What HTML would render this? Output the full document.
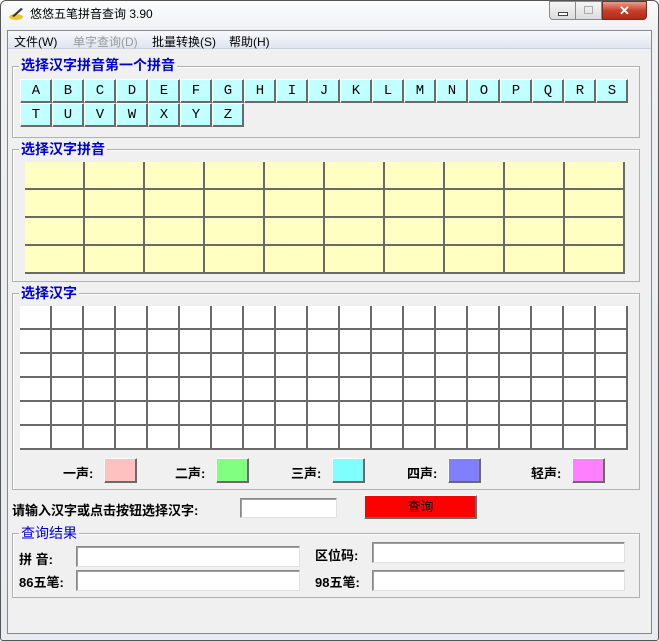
<!DOCTYPE html>
<html><head><meta charset="utf-8"><style>
*{margin:0;padding:0;box-sizing:border-box}
body{width:659px;height:641px;background:#fff;position:relative;overflow:hidden;font-family:"Liberation Sans","Noto Sans CJK SC",sans-serif;font-size:12px;color:#000}
.a{position:absolute}
.win{left:0;top:0;width:659px;height:641px;border:1px solid #555;border-radius:6px 6px 3px 3px;background:linear-gradient(#fdfdfd,#eef0f3 30px,#e8ebef)}
.client{left:7px;top:30px;width:645px;height:604px;background:#f0f0f0;border:1px solid #888}
.menu{left:8px;top:31px;width:643px;height:18px;background:linear-gradient(#f7f9fc,#dfe5f0);border-bottom:1px solid #c9d1de}
.menu span{position:absolute;top:2px;font-size:12px}
.grp{border:1px solid #b0b0b0;box-shadow:1px 1px 0 #fff inset}
.gt{background:#f0f0f0;color:#0000d0;font-weight:bold;font-size:14px;padding:0 2px;line-height:16px}
.b{border:1px solid;border-color:#fff #6a6a6a #6a6a6a #fff;box-shadow:-1px -1px 0 #6a6a6a inset}
.L{width:32px;height:24px;background:#c2ffff;font-family:"Liberation Mono",monospace;font-size:14px;text-align:center;line-height:22px;position:absolute}
.inp{background:#fff;border:1px solid;border-color:#8a8a8a #e0e0e0 #e0e0e0 #8a8a8a;box-shadow:1px 1px 0 #a0a0a0 inset}
.lab{font-weight:bold;font-size:13px}
</style></head><body>
<div class="a win"></div>
<div class="a" style="left:8px;top:6px;width:16px;height:14px;"><svg width="16" height="14"><ellipse cx="8" cy="11" rx="7" ry="3" fill="#e8c830"/><path d="M4 10 L13 2 L15 3 L6 11Z" fill="#333"/></svg></div>
<div class="a" style="left:30px;top:5px;font-size:12px">悠悠五笔拼音查询 3.90</div>
<div class="a" style="left:549px;top:1px;width:27px;height:19px;border:1px solid #8a8a8a;border-radius:0 0 0 4px;background:linear-gradient(#f6f6f6,#dcdcdc)"><div class="a" style="left:8px;top:10px;width:10px;height:4px;border:1px solid #444;background:#fff"></div></div>
<div class="a" style="left:576px;top:1px;width:26px;height:19px;border:1px solid #8a8a8a;border-left:0;background:linear-gradient(#f6f6f6,#dcdcdc)"><div class="a" style="left:8px;top:4px;width:9px;height:8px;border:1px solid #aaa"></div></div>
<div class="a" style="left:602px;top:1px;width:45px;height:19px;border:1px solid #7a2a20;border-radius:0 0 4px 0;background:linear-gradient(#e8a090,#c8402c 50%,#b02a18);color:#fff;font-weight:bold;text-align:center;font-size:13px;line-height:17px">✕</div>
<div class="a client"></div>
<div class="a menu"><span style="left:6px">文件(W)</span><span style="left:65px;color:#999">单字查询(D)</span><span style="left:144px">批量转换(S)</span><span style="left:221px">帮助(H)</span></div>

<div class="a grp" style="left:12px;top:66px;width:628px;height:72px"></div>
<div class="a gt" style="left:19px;top:57px">选择汉字拼音第一个拼音</div>
<div class="a grp" style="left:12px;top:149px;width:628px;height:133px"></div>
<div class="a gt" style="left:19px;top:141px">选择汉字拼音</div>
<div class="a grp" style="left:12px;top:293px;width:628px;height:197px"></div>
<div class="a gt" style="left:19px;top:285px">选择汉字</div>

<div class="a L b" style="left:20px;top:79px">A</div><div class="a L b" style="left:52px;top:79px">B</div><div class="a L b" style="left:84px;top:79px">C</div><div class="a L b" style="left:116px;top:79px">D</div><div class="a L b" style="left:148px;top:79px">E</div><div class="a L b" style="left:180px;top:79px">F</div><div class="a L b" style="left:212px;top:79px">G</div><div class="a L b" style="left:244px;top:79px">H</div><div class="a L b" style="left:276px;top:79px">I</div><div class="a L b" style="left:308px;top:79px">J</div><div class="a L b" style="left:340px;top:79px">K</div><div class="a L b" style="left:372px;top:79px">L</div><div class="a L b" style="left:404px;top:79px">M</div><div class="a L b" style="left:436px;top:79px">N</div><div class="a L b" style="left:468px;top:79px">O</div><div class="a L b" style="left:500px;top:79px">P</div><div class="a L b" style="left:532px;top:79px">Q</div><div class="a L b" style="left:564px;top:79px">R</div><div class="a L b" style="left:596px;top:79px">S</div>
<div class="a L b" style="left:20px;top:103px">T</div><div class="a L b" style="left:52px;top:103px">U</div><div class="a L b" style="left:84px;top:103px">V</div><div class="a L b" style="left:116px;top:103px">W</div><div class="a L b" style="left:148px;top:103px">X</div><div class="a L b" style="left:180px;top:103px">Y</div><div class="a L b" style="left:212px;top:103px">Z</div>

<div class="a" style="left:25px;top:162px;width:600px;height:112px;background-color:#ffffc2;background-image:repeating-linear-gradient(to right,transparent 0 58px,#6a6a6a 58px 60px),repeating-linear-gradient(to bottom,transparent 0 26px,#6a6a6a 26px 28px)"></div>
<div class="a" style="left:20px;top:306px;width:608px;height:144px;background-color:#fff;background-image:repeating-linear-gradient(to right,transparent 0 30px,#6a6a6a 30px 32px),repeating-linear-gradient(to bottom,transparent 0 22px,#6a6a6a 22px 24px)"></div>

<div class="a lab" style="left:63px;top:463px">一声:</div><div class="a b" style="left:104px;top:458px;width:33px;height:25px;background:#ffc0c0"></div>
<div class="a lab" style="left:175px;top:463px">二声:</div><div class="a b" style="left:216px;top:458px;width:33px;height:25px;background:#80ff80"></div>
<div class="a lab" style="left:291px;top:463px">三声:</div><div class="a b" style="left:332px;top:458px;width:33px;height:25px;background:#80ffff"></div>
<div class="a lab" style="left:407px;top:463px">四声:</div><div class="a b" style="left:448px;top:458px;width:33px;height:25px;background:#8080ff"></div>
<div class="a lab" style="left:531px;top:463px">轻声:</div><div class="a b" style="left:572px;top:458px;width:33px;height:25px;background:#ff80ff"></div>

<div class="a lab" style="left:12px;top:500px">请输入汉字或点击按钮选择汉字:</div>
<div class="a inp" style="left:240px;top:498px;width:97px;height:20px"></div>
<div class="a b" style="left:364px;top:495px;width:113px;height:24px;background:#ff0000;text-align:center;line-height:21px;font-size:13px">查询</div>

<div class="a grp" style="left:12px;top:533px;width:628px;height:65px"></div>
<div class="a gt" style="left:19px;top:525px;font-weight:normal">查询结果</div>
<div class="a lab" style="left:19px;top:549px">拼 音:</div>
<div class="a inp" style="left:76px;top:546px;width:224px;height:21px"></div>
<div class="a lab" style="left:315px;top:545px">区位码:</div>
<div class="a inp" style="left:372px;top:542px;width:253px;height:21px"></div>
<div class="a lab" style="left:19px;top:572px">86五笔:</div>
<div class="a inp" style="left:76px;top:570px;width:224px;height:21px"></div>
<div class="a lab" style="left:315px;top:572px">98五笔:</div>
<div class="a inp" style="left:372px;top:570px;width:253px;height:21px"></div>
</body></html>
